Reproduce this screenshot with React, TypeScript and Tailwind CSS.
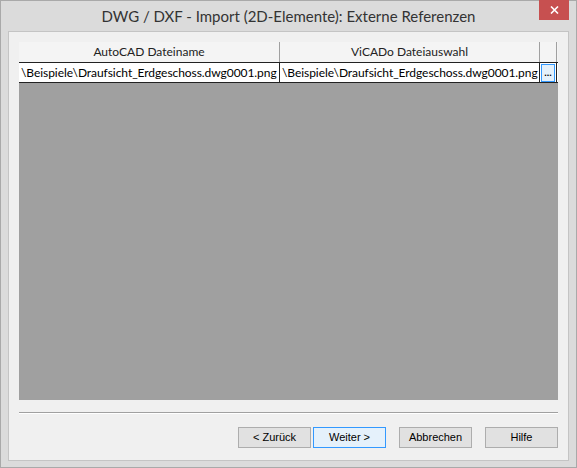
export default function App() {
  const path = "\\Beispiele\\Draufsicht_Erdgeschoss.dwg0001.png";

  return (
    <div className="flex h-[468px] w-[577px] flex-col border border-[#a9a9a9] bg-[#dbdbdb]">
      <div className="relative flex h-[30px] shrink-0 items-center justify-center">
        <span className="font-['Lato',sans-serif] text-[15px] text-[#333]">DWG / DXF - Import (2D-Elemente): Externe Referenzen</span>
        <div className="absolute right-[7px] top-[-1px] flex h-[20px] w-[30px] items-center justify-center bg-[#c75050]">
          <svg width="9" height="8" viewBox="0 0 9 8">
            <path d="M1 0.5 L8 7.5 M8 0.5 L1 7.5" stroke="#fff" strokeWidth="1.6" />
          </svg>
        </div>
      </div>

      <div className="mx-[7px] mb-[6px] flex flex-1 flex-col border border-[#c4c4c4] bg-[#f0f0f0] px-[10px] pt-[10px]">
        <div className="flex h-[358px] flex-col bg-[#a0a0a0]">
          <div className="flex h-[20px] bg-[#f4f4f4] font-['Lato',sans-serif] text-[12px] text-[#222]">
            <div className="flex w-[261px] items-center justify-center border-r border-[#a0a0a0]">AutoCAD Dateiname</div>
            <div className="flex w-[260px] items-center justify-center border-r border-[#a0a0a0]">ViCADo Dateiauswahl</div>
            <div className="w-[17px] border-r border-[#a0a0a0]" />
          </div>
          <div className="flex h-[21px] border-b border-t border-[#222] bg-white font-['Lato',sans-serif] text-[12px] tracking-[-0.06px] text-black">
            <div className="flex w-[261px] items-center overflow-hidden whitespace-nowrap border-r border-[#222] pl-[2px]">{path}</div>
            <div className="flex w-[260px] items-center overflow-hidden whitespace-nowrap border-r border-[#222] pl-[2px]">{path}</div>
            <div className="flex w-[17px] items-center justify-center border-r border-[#222]">
              <div className="flex h-[18px] w-[14px] items-end justify-center border border-[#3399ff] bg-[#e5f1fb] pb-[3px] font-['Liberation_Sans',sans-serif] text-[9px] font-bold leading-none">
                ...
              </div>
            </div>
          </div>
        </div>

        <div className="mt-[12px] border-b border-t border-b-white border-t-[#a0a0a0]" />

        <div className="mt-[13px] flex justify-end gap-[13px] font-['Liberation_Sans',sans-serif] text-[11px] text-black">
          <div className="flex">
            <button className="h-[21px] w-[73px] border border-[#adadad] bg-[#e1e1e1]">&lt; Zurück</button>
            <button className="ml-[2px] h-[21px] w-[73px] border border-[#3399ff] bg-[#e5f1fb]">Weiter &gt;</button>
          </div>
          <button className="h-[21px] w-[73px] border border-[#adadad] bg-[#e1e1e1]">Abbrechen</button>
          <button className="h-[21px] w-[73px] border border-[#adadad] bg-[#e1e1e1]">Hilfe</button>
        </div>
      </div>
    </div>
  );
}
